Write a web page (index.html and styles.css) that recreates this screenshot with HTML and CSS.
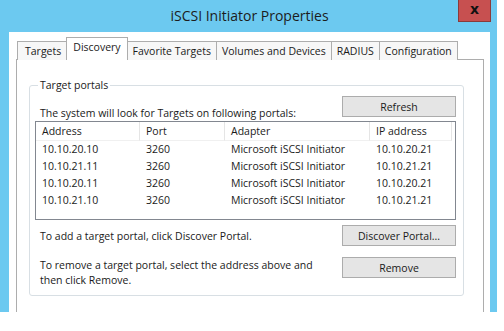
FILE: index.html
```html
<!DOCTYPE html>
<html lang="en">
<head>
    <meta charset="UTF-8">
    <title>iSCSI Initiator Properties</title>
    <link rel="stylesheet" href="styles.css">
</head>
<body>
    <div class="window">
        <div class="titlebar">
            <span class="title">iSCSI Initiator Properties</span>
            <span class="close">x</span>
        </div>
        <div class="client">
            <div class="tabs">
                <div class="tab">Targets</div>
                <div class="tab active">Discovery</div>
                <div class="tab">Favorite Targets</div>
                <div class="tab">Volumes and Devices</div>
                <div class="tab">RADIUS</div>
                <div class="tab">Configuration</div>
            </div>
            <div class="panel">
                <fieldset class="group">
                    <legend>Target portals</legend>
                    <div class="row top">
                        <span>The system will look for Targets on following portals:</span>
                        <button>Refresh</button>
                    </div>
                    <div class="list">
                        <div class="lrow head">
                            <div>Address</div><div>Port</div><div>Adapter</div><div>IP address</div>
                        </div>
                        <div class="lrow"><div>10.10.20.10</div><div>3260</div><div>Microsoft iSCSI Initiator</div><div>10.10.20.21</div></div>
                        <div class="lrow"><div>10.10.21.11</div><div>3260</div><div>Microsoft iSCSI Initiator</div><div>10.10.21.21</div></div>
                        <div class="lrow"><div>10.10.20.11</div><div>3260</div><div>Microsoft iSCSI Initiator</div><div>10.10.20.21</div></div>
                        <div class="lrow"><div>10.10.21.10</div><div>3260</div><div>Microsoft iSCSI Initiator</div><div>10.10.21.21</div></div>
                    </div>
                    <div class="row add">
                        <span>To add a target portal, click Discover Portal.</span>
                        <button>Discover Portal...</button>
                    </div>
                    <div class="row remove">
                        <span>To remove a target portal, select the address above and<br>then click Remove.</span>
                        <button>Remove</button>
                    </div>
                </fieldset>
            </div>
        </div>
    </div>
</body>
</html>
```

FILE: styles.css
```css
body {
    margin: 0;
    background: #fff;
    font-family: "Open Sans", "Noto Sans", sans-serif;
    font-size: 10.5px;
    color: #1a1a1a;
}
.window {
    width: 481px;
    height: 312px;
    background: #6cc9f0;
    padding: 0 7px 0 9px;
    display: flex;
    flex-direction: column;
}
.titlebar {
    height: 32px;
    display: flex;
    align-items: center;
    justify-content: center;
    position: relative;
}
.title {
    font-size: 14px;
    color: #1c1c1c;
    margin-top: -1px;
}
.close {
    position: absolute;
    top: 0;
    right: -1px;
    width: 31px;
    height: 21px;
    background: #c75050;
    border: 1px solid #8a3a3a;
    border-top: none;
    color: #111;
    font: bold 14px "DejaVu Sans", sans-serif;
    text-align: center;
    line-height: 19px;
}
.client {
    flex: 1;
    background: #fff;
    padding: 6px 6px 0 7px;
    display: flex;
    flex-direction: column;
}
.tabs {
    display: flex;
    align-items: flex-end;
    padding-left: 1px;
    height: 22px;
    margin-bottom: -1px;
    position: relative;
}
.tab {
    border: 1px solid #adadad;
    border-bottom: none;
    background: #f7f7f7;
    padding: 0 5px;
    height: 18px;
    line-height: 18px;
    margin-right: -1px;
}
.tab:first-child {
    padding: 0 6px 0 7px;
}
.tab.active {
    background: #fff;
    height: 22px;
    line-height: 19px;
    padding: 0 6px;
    margin: 0 -1px 0 -1px;
    position: relative;
    z-index: 1;
}
.panel {
    flex: 1;
    border: 1px solid #adadad;
    border-bottom: none;
    padding: 18px 19px 0 12px;
}
.group {
    margin: 0;
    border: 1px solid #d8dfe4;
    border-radius: 3px;
    padding: 0 7px 0 5px;
    height: 216px;
}
.group legend {
    padding: 0 2px;
    margin-left: 3px;
}
.row {
    display: flex;
    justify-content: space-between;
    align-items: center;
    padding-left: 5px;
}
.row.top {
    align-items: flex-end;
    margin-top: 4px;
}
.row.top span {
    margin-bottom: -3px;
}
.row.add {
    margin-top: 5px;
}
.row.remove {
    margin-top: 11px;
    align-items: flex-start;
}
.row.remove span {
    margin-top: 1px;
    line-height: 15px;
}
button {
    font: inherit;
    color: inherit;
    width: 114px;
    height: 21px;
    background: #e5e5e5;
    border: 1px solid #acacac;
    padding: 0;
}
.list {
    margin-top: 4px;
    border: 1px solid #828790;
    height: 97px;
}
.lrow {
    display: grid;
    grid-template-columns: 104px 85px 145px 82px;
    height: 17px;
    line-height: 17px;
}
.lrow div {
    padding-left: 6px;
    white-space: nowrap;
}
.lrow.head {
    height: 18px;
    line-height: 18px;
    margin-bottom: 1px;
}
.lrow.head div {
    border-right: 1px solid #e5e5e5;
    border-bottom: 1px solid #f0f0f0;
}
```
